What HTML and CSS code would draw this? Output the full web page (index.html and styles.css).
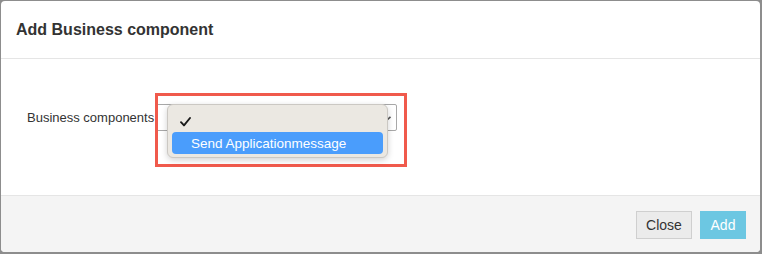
FILE: index.html
```html
<!DOCTYPE html>
<html>
<head>
<meta charset="utf-8">
<link rel="stylesheet" href="styles.css">
</head>
<body>
<div class="modal">
  <div class="modal-header">
    <h4 class="modal-title">Add Business component</h4>
  </div>
  <div class="modal-body">
    <div class="form-row">
      <label class="form-label">Business components</label>
      <div class="select-wrap">
        <div class="select">
          <svg class="select-arrow" width="6" height="6" viewBox="0 0 6 6"><path d="M0.5 4.5 L4.5 0.8" stroke="#555" stroke-width="1.6" fill="none"/></svg>
        </div>
        <div class="highlight-box"></div>
        <div class="popup">
          <div class="popup-item">
            <svg class="check" width="11" height="10" viewBox="0 0 11 10"><path d="M1 5.2 L4 8.4 L10 1" stroke="#1a1a1a" stroke-width="1.9" fill="none" stroke-linecap="round" stroke-linejoin="round"/></svg>
          </div>
          <div class="popup-item selected">Send Applicationmessage</div>
        </div>
      </div>
    </div>
  </div>
  <div class="modal-footer">
    <button class="btn btn-default">Close</button>
    <button class="btn btn-info">Add</button>
  </div>
</div>
</body>
</html>
```
FILE: styles.css
```css
* { box-sizing: border-box; }
html, body { margin: 0; padding: 0; }
body {
  background: #8d8d8d;
  width: 762px;
  height: 254px;
  overflow: hidden;
  font-family: "Liberation Sans", Arial, sans-serif;
  color: #333;
}
.modal {
  margin: 1px 0 0 1px;
  width: 759px;
  height: 251px;
  background: #fff;
  border-radius: 4px;
  display: flex;
  flex-direction: column;
  overflow: hidden;
}
.modal-header {
  height: 58px;
  border-bottom: 1px solid #e5e5e5;
  padding: 0 15px;
  display: flex;
  align-items: center;
}
.modal-title {
  margin: 0;
  font-size: 16px;
  font-weight: bold;
  color: #333;
}
.modal-body {
  flex: 1;
  padding: 45px 0 0 26px;
}
.form-row {
  display: flex;
  align-items: center;
}
.form-label {
  font-size: 13px;
  color: #333;
  width: 129px;
}
.select-wrap {
  position: relative;
}
.select {
  width: 241px;
  height: 27px;
  border: 1px solid #a8a8a8;
  border-radius: 2px;
  background: #fff;
  position: relative;
}
.select-arrow {
  position: absolute;
  right: 4px;
  top: 11px;
}
.highlight-box {
  position: absolute;
  left: -1px;
  top: -11px;
  width: 252px;
  height: 74px;
  border: 3px solid #f05a4c;
}
.popup {
  position: absolute;
  left: 11px;
  top: 0;
  width: 221px;
  height: 54px;
  background: #ebe8e2;
  border: 1px solid #cbc8c3;
  border-radius: 6px;
  box-shadow: 0 2px 6px rgba(0,0,0,0.18);
  padding: 4px 4px;
}
.popup-item {
  height: 23px;
  display: flex;
  align-items: center;
  padding-left: 19px;
  font-size: 13.5px;
  color: #1a1a1a;
}
.popup-item .check {
  margin-left: -11px;
  margin-top: 3px;
}
.popup-item.selected {
  height: 22px;
  background: #4a9dfc;
  color: #fff;
  border-radius: 4px;
}
.modal-footer {
  height: 57px;
  border-top: 1px solid #e5e5e5;
  background: #f4f4f4;
  display: flex;
  justify-content: flex-end;
  align-items: center;
  gap: 8px;
  padding: 0 14px 0 0;
}
.btn {
  font-family: "Liberation Sans", Arial, sans-serif;
  font-size: 14px;
  height: 28px;
  border-radius: 0;
  padding: 0 9px;
  margin-top: 1px;
}
.btn-default {
  width: 56px;
  background: #ebebeb;
  border: 1px solid #cfcfcf;
  color: #333;
}
.btn-info {
  width: 46px;
  background: #6cc7e2;
  border: 1px solid #6cc7e2;
  color: #fff;
}
```
